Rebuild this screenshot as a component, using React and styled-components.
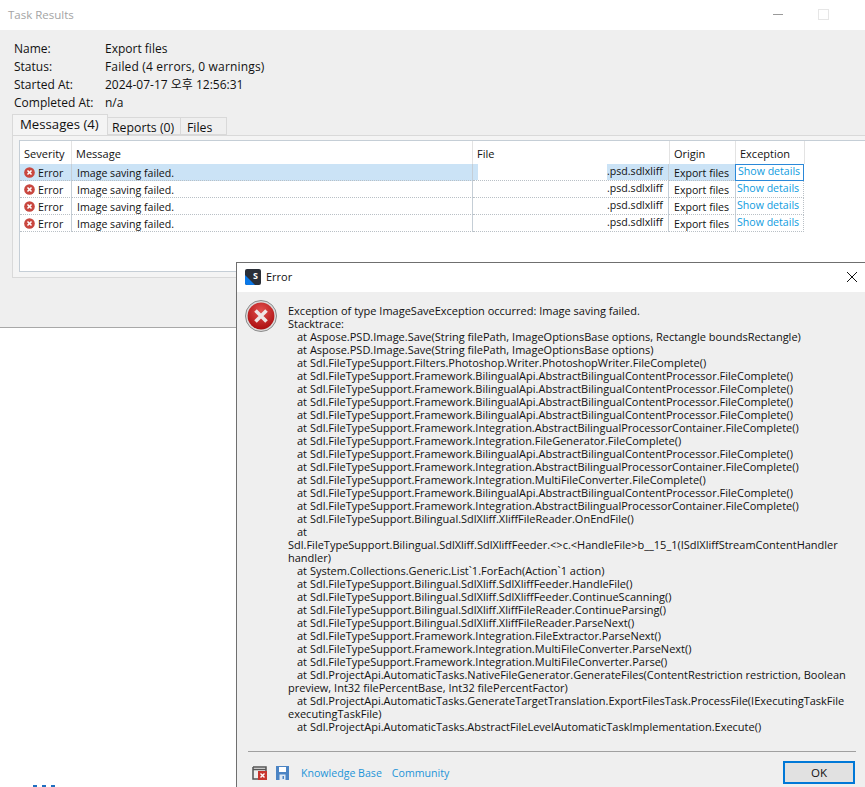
import React from 'react';
import styled, { createGlobalStyle } from 'styled-components';

const GlobalStyle = createGlobalStyle`
  html, body {
    margin: 0;
    padding: 0;
    background: #fff;
    overflow: hidden;
  }
  body {
    font-family: "Open Sans", "Noto Sans CJK KR", sans-serif;
    font-size: 12px;
    color: #111;
  }
`;

const Page = styled.div`
  position: relative;
  width: 865px;
  height: 787px;
  overflow: hidden;
  background: #fff;
`;

const TitleBar = styled.div`
  height: 30px;
  display: flex;
  align-items: center;
  padding: 0 0 2px 8px;
  box-sizing: border-box;
  background: #fff;
`;

const FadedTitle = styled.span`
  color: #a4a4a4;
  font-size: 11.5px;
`;

const WinControls = styled.div`
  margin-left: auto;
  display: flex;
  align-items: center;
  gap: 35px;
  width: 92px;
  height: 100%;
`;

const MinLine = styled.div`
  width: 10px;
  height: 1px;
  background: #9a9a9a;
`;

const MaxBox = styled.div`
  width: 9px;
  height: 9px;
  border: 1px solid #e6e6e6;
`;

const Body = styled.div`
  height: 298px;
  box-sizing: border-box;
  background: #efefef;
  border-bottom: 1px solid #a8a8a8;
  padding: 10px 0 0 12px;
`;

const InfoBlock = styled.div`
  padding-left: 2px;
  display: flex;
  flex-direction: column;
`;

const InfoRow = styled.div`
  display: flex;
  height: 18px;
  line-height: 18px;
`;

const InfoLabel = styled.span`
  width: 91px;
`;

const StatusText = styled.span`
  letter-spacing: 0.17px;
`;

const TabStrip = styled.div`
  display: flex;
  align-items: flex-end;
  height: 20px;
  margin-top: 3px;
`;

const Tab = styled.div`
  box-sizing: border-box;
  height: ${p => (p.$active ? 21 : 18)}px;
  width: ${p => p.$width}px;
  padding-left: ${p => p.$pad}px;
  font-size: ${p => (p.$active ? 13.2 : 12.3)}px;
  line-height: 19px;
  border: 1px solid #d9d9d9;
  border-left-width: ${p => (p.$active ? 1 : 0)}px;
  border-bottom: ${p => (p.$active ? 'none' : '1px solid #d9d9d9')};
  background: ${p => (p.$active ? '#f4f4f4' : '#efefef')};
  position: relative;
  z-index: ${p => (p.$active ? 1 : 0)};
`;

const TabPanel = styled.div`
  box-sizing: border-box;
  width: 900px;
  height: 143px;
  border: 1px solid #d9d9d9;
  padding: 4px 0 0 6px;
  background: #f4f4f4;
`;

const ListBox = styled.div`
  box-sizing: border-box;
  height: 132px;
  border: 1px solid #c5ced6;
  background: #fff;
`;

const Row = styled.div`
  display: flex;
  height: ${p => (p.$head ? 23 : 17)}px;
  font-size: ${p => (p.$head ? 11 : 10.6)}px;
`;

const Cell = styled.div`
  box-sizing: border-box;
  width: ${p => p.$w}px;
  display: flex;
  align-items: center;
  white-space: nowrap;
  overflow: hidden;
  padding-left: ${p => p.$pad ?? 4}px;
  padding-top: 1px;
  border-right: 1px solid ${p => (p.$head ? '#e3e3e3' : '#c5ced6')};
  border-bottom: ${p => (p.$head ? 'none' : '1px dotted #b9c0c6')};
  background: ${p => (p.$sel ? '#cbe3f6' : 'transparent')};
`;

const FileSpacer = styled.div`
  box-sizing: border-box;
  width: 196px;
  display: flex;
  border-right: 1px solid #c5ced6;
  border-bottom: 1px dotted #b9c0c6;
`;

const FileStart = styled.div`
  width: 5px;
  background: ${p => (p.$sel ? '#cbe3f6' : 'transparent')};
`;

const FileName = styled.div`
  margin-left: auto;
  width: 61px;
  line-height: 15px;
  background: ${p => (p.$sel ? '#cbe3f6' : 'transparent')};
  white-space: nowrap;
`;

const LinkCell = styled.div`
  box-sizing: border-box;
  width: 69px;
  padding-left: 2px;
  line-height: 13px;
  color: #0f9ce0;
  white-space: nowrap;
  border: ${p => (p.$focus ? '1px solid #2b88d8' : 'none')};
  border-right: ${p => (p.$focus ? '1px solid #2b88d8' : '1px dotted #b9c0c6')};
  border-bottom: ${p => (p.$focus ? '1px solid #2b88d8' : '1px dotted #b9c0c6')};
  padding-top: ${p => (p.$focus ? 0 : 1)}px;
  margin-left: -1px;
`;

const ErrorDot = styled.svg`
  width: 11px;
  height: 11px;
  margin-right: 3px;
  flex: none;
`;

const BehindSliver = styled.div`
  position: absolute;
  left: 33px;
  bottom: 0;
  width: 22px;
  height: 2px;
  background: repeating-linear-gradient(90deg, #1f6fc0 0 4px, #fff 4px 9px);
`;

const Dialog = styled.div`
  position: absolute;
  left: 236px;
  top: 262px;
  width: 660px;
  height: 540px;
  box-sizing: border-box;
  border: 1px solid #6f6f6f;
  background: #efefef;
  display: flex;
  flex-direction: column;
`;

const DialogTitle = styled.div`
  height: 29px;
  flex: none;
  box-sizing: border-box;
  background: #fff;
  display: flex;
  align-items: center;
  padding: 0 0 1px 8px;
  gap: 5px;
  font-size: 11px;
  position: relative;
`;

const TitleText = styled.span`
  position: relative;
  top: -1px;
`;

const CloseGlyph = styled.svg`
  position: absolute;
  left: 609px;
  top: 8px;
  width: 12px;
  height: 12px;
`;

const DialogBody = styled.div`
  display: flex;
  padding: 8px 0 0 8px;
  height: 459px;
  box-sizing: border-box;
`;

const BigError = styled.svg`
  width: 32px;
  height: 32px;
  flex: none;
  margin-right: 11px;
`;

const Trace = styled.div`
  width: 570px;
  font-size: 11px;
  line-height: 13px;
  padding-top: 4px;
`;

const TraceLine = styled.div`
  padding-left: ${p => (p.$at ? 9 : 0)}px;
  white-space: nowrap;
`;

const Divider = styled.div`
  margin-left: 11px;
  height: 1px;
  background: #a0a0a0;
  width: 608px;
  flex: none;
`;

const DialogFooter = styled.div`
  display: flex;
  align-items: center;
  padding: 9px 0 0 15px;
  width: 618px;
  box-sizing: border-box;
`;

const FootIcon = styled.svg`
  width: ${p => p.$w}px;
  height: 14px;
  margin-right: ${p => p.$gap}px;
  flex: none;
`;

const FootLink = styled.span`
  color: #1d94d8;
  font-size: 10.6px;
  margin-right: ${p => p.$gap}px;
`;

const OkButton = styled.button`
  margin-left: auto;
  box-sizing: border-box;
  width: 72px;
  height: 23px;
  padding: 0;
  border: 2px solid #0078d7;
  background: #e1e1e1;
  font-family: inherit;
  font-size: 11.5px;
  color: #111;
`;

const stackLines = [
  { t: 'Exception of type ImageSaveException occurred: Image saving failed.' },
  { t: 'Stacktrace:' },
  { at: 1, t: 'at Aspose.PSD.Image.Save(String filePath, ImageOptionsBase options, Rectangle boundsRectangle)' },
  { at: 1, t: 'at Aspose.PSD.Image.Save(String filePath, ImageOptionsBase options)' },
  { at: 1, t: 'at Sdl.FileTypeSupport.Filters.Photoshop.Writer.PhotoshopWriter.FileComplete()' },
  { at: 1, t: 'at Sdl.FileTypeSupport.Framework.BilingualApi.AbstractBilingualContentProcessor.FileComplete()' },
  { at: 1, t: 'at Sdl.FileTypeSupport.Framework.BilingualApi.AbstractBilingualContentProcessor.FileComplete()' },
  { at: 1, t: 'at Sdl.FileTypeSupport.Framework.BilingualApi.AbstractBilingualContentProcessor.FileComplete()' },
  { at: 1, t: 'at Sdl.FileTypeSupport.Framework.BilingualApi.AbstractBilingualContentProcessor.FileComplete()' },
  { at: 1, t: 'at Sdl.FileTypeSupport.Framework.Integration.AbstractBilingualProcessorContainer.FileComplete()' },
  { at: 1, t: 'at Sdl.FileTypeSupport.Framework.Integration.FileGenerator.FileComplete()' },
  { at: 1, t: 'at Sdl.FileTypeSupport.Framework.BilingualApi.AbstractBilingualContentProcessor.FileComplete()' },
  { at: 1, t: 'at Sdl.FileTypeSupport.Framework.Integration.AbstractBilingualProcessorContainer.FileComplete()' },
  { at: 1, t: 'at Sdl.FileTypeSupport.Framework.Integration.MultiFileConverter.FileComplete()' },
  { at: 1, t: 'at Sdl.FileTypeSupport.Framework.BilingualApi.AbstractBilingualContentProcessor.FileComplete()' },
  { at: 1, t: 'at Sdl.FileTypeSupport.Framework.Integration.AbstractBilingualProcessorContainer.FileComplete()' },
  { at: 1, t: 'at Sdl.FileTypeSupport.Bilingual.SdlXliff.XliffFileReader.OnEndFile()' },
  { at: 1, t: 'at' },
  { t: 'Sdl.FileTypeSupport.Bilingual.SdlXliff.SdlXliffFeeder.<>c.<HandleFile>b__15_1(ISdlXliffStreamContentHandler' },
  { t: 'handler)' },
  { at: 1, t: 'at System.Collections.Generic.List`1.ForEach(Action`1 action)' },
  { at: 1, t: 'at Sdl.FileTypeSupport.Bilingual.SdlXliff.SdlXliffFeeder.HandleFile()' },
  { at: 1, t: 'at Sdl.FileTypeSupport.Bilingual.SdlXliff.SdlXliffFeeder.ContinueScanning()' },
  { at: 1, t: 'at Sdl.FileTypeSupport.Bilingual.SdlXliff.XliffFileReader.ContinueParsing()' },
  { at: 1, t: 'at Sdl.FileTypeSupport.Bilingual.SdlXliff.XliffFileReader.ParseNext()' },
  { at: 1, t: 'at Sdl.FileTypeSupport.Framework.Integration.FileExtractor.ParseNext()' },
  { at: 1, t: 'at Sdl.FileTypeSupport.Framework.Integration.MultiFileConverter.ParseNext()' },
  { at: 1, t: 'at Sdl.FileTypeSupport.Framework.Integration.MultiFileConverter.Parse()' },
  { at: 1, t: 'at Sdl.ProjectApi.AutomaticTasks.NativeFileGenerator.GenerateFiles(ContentRestriction restriction, Boolean' },
  { t: 'preview, Int32 filePercentBase, Int32 filePercentFactor)' },
  { at: 1, t: 'at Sdl.ProjectApi.AutomaticTasks.GenerateTargetTranslation.ExportFilesTask.ProcessFile(IExecutingTaskFile' },
  { t: 'executingTaskFile)' },
  { at: 1, t: 'at Sdl.ProjectApi.AutomaticTasks.AbstractFileLevelAutomaticTaskImplementation.Execute()' },
];

function SmallError() {
  return (
    <ErrorDot viewBox="0 0 12 12">
      <circle cx="6" cy="6" r="5.8" fill="#c9473f" />
      <path d="M3.8 3.8l4.4 4.4M8.2 3.8l-4.4 4.4" stroke="#fff" strokeWidth="1.7" />
    </ErrorDot>
  );
}

function LargeError() {
  return (
    <BigError viewBox="0 0 32 32">
      <defs>
        <radialGradient id="redFill" cx="50%" cy="30%" r="75%">
          <stop offset="0%" stopColor="#e2504e" />
          <stop offset="100%" stopColor="#a80a0c" />
        </radialGradient>
      </defs>
      <circle cx="16" cy="16" r="15.5" fill="#dcdcdc" stroke="#8a8a8a" strokeWidth="1" />
      <circle cx="16" cy="16" r="13.4" fill="url(#redFill)" />
      <path d="M10.5 10.5l11 11M21.5 10.5l-11 11" stroke="#efe6e6" strokeWidth="3.6" />
    </BigError>
  );
}

function AppLogo() {
  return (
    <svg width="16" height="16" viewBox="0 0 16 16">
      <rect width="16" height="16" rx="2" fill="#2a2f38" />
      <path d="M0 6L10 16H2a2 2 0 0 1-2-2z" fill="#0a78e8" />
      <text x="8" y="9.5" fontSize="9" fontWeight="700" fill="#fff" fontFamily="Open Sans">S</text>
    </svg>
  );
}

export default function App() {
  const rows = [0, 1, 2, 3];
  return (
    <Page>
      <GlobalStyle />
      <TitleBar>
        <FadedTitle>Task Results</FadedTitle>
        <WinControls>
          <MinLine />
          <MaxBox />
        </WinControls>
      </TitleBar>
      <Body>
        <InfoBlock>
          <InfoRow><InfoLabel>Name:</InfoLabel><span>Export files</span></InfoRow>
          <InfoRow><InfoLabel>Status:</InfoLabel><StatusText>Failed (4 errors, 0 warnings)</StatusText></InfoRow>
          <InfoRow><InfoLabel>Started At:</InfoLabel><span>2024-07-17 오후 12:56:31</span></InfoRow>
          <InfoRow><InfoLabel>Completed At:</InfoLabel><span>n/a</span></InfoRow>
        </InfoBlock>
        <TabStrip>
          <Tab $active $width={96} $pad={7}>Messages (4)</Tab>
          <Tab $width={73} $pad={4}>Reports (0)</Tab>
          <Tab $width={46} $pad={6}>Files</Tab>
        </TabStrip>
        <TabPanel>
          <ListBox>
            <Row $head>
              <Cell $head $w={52}>Severity</Cell>
              <Cell $head $w={401}>Message</Cell>
              <Cell $head $w={197}>File</Cell>
              <Cell $head $w={66}>Origin</Cell>
              <Cell $head $w={69}>Exception</Cell>
            </Row>
            {rows.map(i => (
              <Row key={i}>
                <Cell $w={52} $pad={4} $sel={i === 0}><SmallError />Error</Cell>
                <Cell $w={401} $pad={5} $sel={i === 0}>Image saving failed.</Cell>
                <FileSpacer>
                  <FileStart $sel={i === 0} />
                  <FileName $sel={i === 0}>.psd.sdlxliff</FileName>
                </FileSpacer>
                <Cell $w={67} $pad={5} $sel={i === 0}>Export files</Cell>
                <LinkCell $focus={i === 0}>Show details</LinkCell>
              </Row>
            ))}
          </ListBox>
        </TabPanel>
      </Body>
      <BehindSliver />
      <Dialog>
        <DialogTitle>
          <AppLogo />
          <TitleText>Error</TitleText>
          <CloseGlyph viewBox="0 0 12 12">
            <path d="M1 1l10 10M11 1L1 11" stroke="#111" strokeWidth="1" />
          </CloseGlyph>
        </DialogTitle>
        <DialogBody>
          <LargeError />
          <Trace>
            {stackLines.map((line, i) => (
              <TraceLine key={i} $at={line.at}>{line.t}</TraceLine>
            ))}
          </Trace>
        </DialogBody>
        <Divider />
        <DialogFooter>
          <FootIcon $w={15} $gap={9} viewBox="0 0 15 14">
            <path d="M1 1h13v5M1 1v12h6M1 3.5h13" fill="none" stroke="#555" strokeWidth="1.5" />
            <rect x="6" y="5" width="9" height="9" fill="#c8352e" />
            <path d="M8.5 7.5l4 4M12.5 7.5l-4 4" stroke="#fff" strokeWidth="1.4" />
          </FootIcon>
          <FootIcon $w={13} $gap={12} viewBox="0 0 13 14">
            <path d="M0 0h13v14H0z" fill="#4b84c4" />
            <rect x="3" y="1" width="7" height="5" fill="#fff" />
            <rect x="3.5" y="8.5" width="6" height="5.5" fill="#dfe9f4" />
            <rect x="6.5" y="10" width="1.5" height="3" fill="#4b84c4" />
          </FootIcon>
          <FootLink $gap={10}>Knowledge Base</FootLink>
          <FootLink $gap={0}>Community</FootLink>
          <OkButton>OK</OkButton>
        </DialogFooter>
      </Dialog>
    </Page>
  );
}
